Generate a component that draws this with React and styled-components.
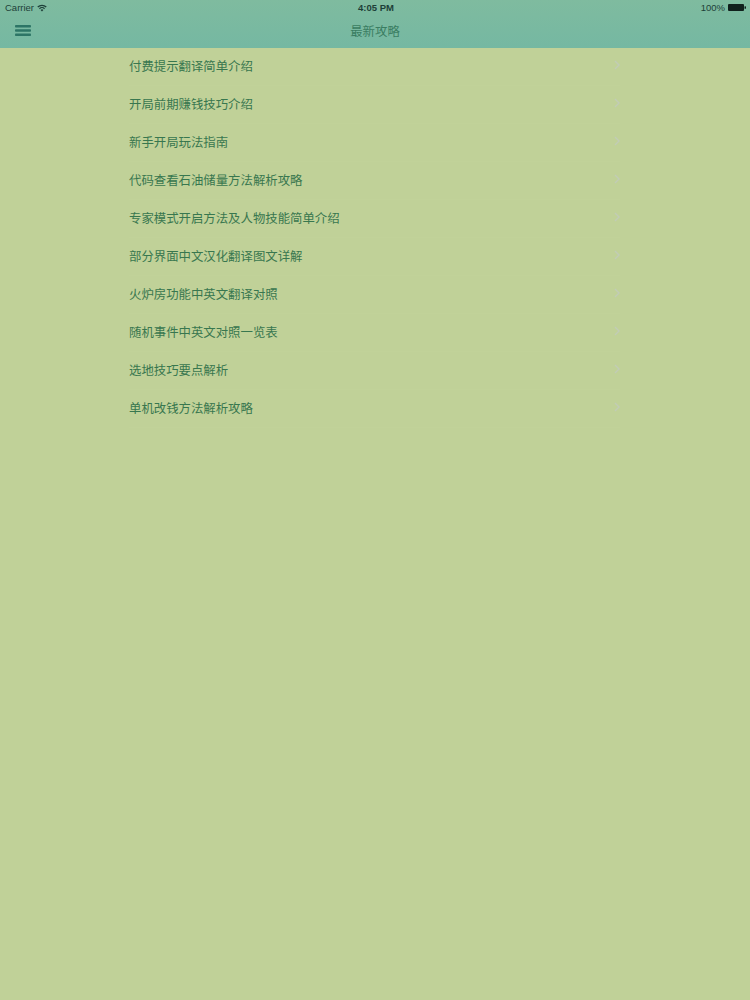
import React from "react";
import styled, { createGlobalStyle } from "styled-components";

const items = [
  "付费提示翻译简单介绍",
  "开局前期赚钱技巧介绍",
  "新手开局玩法指南",
  "代码查看石油储量方法解析攻略",
  "专家模式开启方法及人物技能简单介绍",
  "部分界面中文汉化翻译图文详解",
  "火炉房功能中英文翻译对照",
  "随机事件中英文对照一览表",
  "选地技巧要点解析",
  "单机改钱方法解析攻略",
];

const GlobalStyle = createGlobalStyle`
  html, body {
    margin: 0;
    padding: 0;
    height: 100%;
    background: #c0d198;
  }
  #root {
    height: 100%;
  }
`;

const Page = styled.div`
  width: 750px;
  height: 1000px;
  overflow: hidden;
  background: #c0d198;
  font-family: "Liberation Sans", "Noto Sans CJK SC", sans-serif;
`;

const Header = styled.header`
  height: 48px;
  background: linear-gradient(#7fbb9f, #75b8a2);
`;

const StatusBar = styled.div`
  height: 15px;
  padding: 0 4px 0 5px;
  display: grid;
  grid-template-columns: 1fr auto 1fr;
  align-items: center;
  font-size: 9.5px;
  color: #1d3f38;
`;

const Carrier = styled.div`
  display: flex;
  align-items: center;
  gap: 3px;
`;

const Clock = styled.div`
  font-weight: 700;
  font-size: 9.5px;
  margin-left: 1px;
`;

const Battery = styled.div`
  display: flex;
  align-items: center;
  justify-content: flex-end;
  gap: 3px;
`;

const NavBar = styled.div`
  height: 31px;
  padding: 0 15px;
  display: grid;
  grid-template-columns: 1fr auto 1fr;
  align-items: center;
`;

const Title = styled.div`
  font-size: 12.4px;
  color: #3a7d62;
`;

const MenuIcon = styled.svg`
  display: block;
  width: 16px;
  height: 11px;
  color: #2d7566;
`;

const List = styled.ul`
  list-style: none;
  margin: 0;
  padding: 0 0 0 129px;
`;

const Row = styled.li`
  box-sizing: border-box;
  height: 38px;
  width: 491px;
  padding-bottom: 2px;
  display: flex;
  align-items: center;
  justify-content: space-between;
  font-size: 12.4px;
  color: #38774f;
  box-shadow: inset 0 -1px 0 rgba(200, 220, 160, 0.15);
`;

const Chevron = styled.svg`
  width: 6px;
  height: 10px;
  margin-top: -2px;
  opacity: 0.55;
`;

export default function App() {
  return (
    <Page>
      <GlobalStyle />
      <Header>
        <StatusBar>
          <Carrier>
            Carrier
            <svg width="10" height="8" viewBox="0 0 10 8">
              <path d="M0.3 2.6a6.6 6.6 0 0 1 9.4 0l-.9.9a5.3 5.3 0 0 0-7.6 0z" fill="#1d3f38" />
              <path d="M2 4.3a4.2 4.2 0 0 1 6 0l-.9.9a2.9 2.9 0 0 0-4.2 0z" fill="#1d3f38" />
              <path d="M3.6 5.9a1.9 1.9 0 0 1 2.8 0L5 7.4z" fill="#1d3f38" />
            </svg>
          </Carrier>
          <Clock>4:05 PM</Clock>
          <Battery>
            100%
            <svg width="18" height="7" viewBox="0 0 18 7">
              <rect x="0" y="0" width="16" height="7" rx="1" fill="#10201c" />
              <rect x="16.5" y="2.2" width="1.5" height="2.6" rx="0.5" fill="#10201c" />
            </svg>
          </Battery>
        </StatusBar>
        <NavBar>
          <MenuIcon viewBox="0 0 16 11">
            <rect y="0" width="16" height="2.6" rx="0.8" fill="currentColor" />
            <rect y="4.2" width="16" height="2.6" rx="0.8" fill="currentColor" />
            <rect y="8.4" width="16" height="2.6" rx="0.8" fill="currentColor" />
          </MenuIcon>
          <Title>最新攻略</Title>
        </NavBar>
      </Header>
      <List>
        {items.map((item) => (
          <Row key={item}>
            {item}
            <Chevron viewBox="0 0 6 10">
              <path d="M1 1l4 4-4 4" fill="none" stroke="#c3c9cf" strokeWidth="1.4" />
            </Chevron>
          </Row>
        ))}
      </List>
    </Page>
  );
}
